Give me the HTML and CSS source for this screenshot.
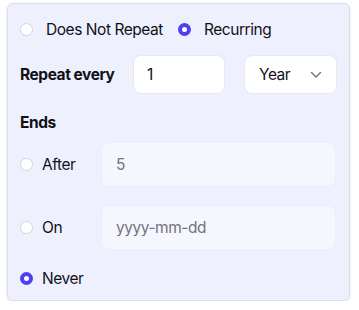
FILE: index.html
```html
<!DOCTYPE html>
<html lang="en">
<head>
    <meta charset="UTF-8">
    <meta name="viewport" content="width=device-width, initial-scale=1.0">
    <title>Repeat</title>
    <link rel="stylesheet" href="styles.css">
</head>
<body>
    <div class="card">
        <div class="mode-row">
            <label class="opt opt-wide"><input type="radio" name="mode"> Does Not Repeat</label>
            <label class="opt opt-wide"><input type="radio" name="mode" checked> Recurring</label>
        </div>

        <div class="every-row">
            <span class="heading">Repeat every</span>
            <input class="field" type="text" value="1">
            <div class="field select">
                <span>Year</span>
                <svg width="12" height="8" viewBox="0 0 12 8"><path d="M1.5 1.5 L6 6 L10.5 1.5" fill="none" stroke="#6b7280" stroke-width="1.4" stroke-linecap="round" stroke-linejoin="round"/></svg>
            </div>
        </div>

        <div class="heading ends">Ends</div>

        <div class="end-row">
            <label class="opt end-label"><input type="radio" name="end"> After</label>
            <input class="field soft" type="text" placeholder="5">
        </div>
        <div class="end-row second">
            <label class="opt end-label"><input type="radio" name="end"> On</label>
            <input class="field soft" type="text" placeholder="yyyy-mm-dd">
        </div>
        <div class="never-row">
            <label class="opt"><input type="radio" name="end" checked> Never</label>
        </div>
    </div>
</body>
</html>
```

FILE: styles.css
```css
body{
    margin: 0;
    background: #fff;
    font-family: Inter, "Noto Sans", sans-serif;
    font-size: 15.5px;
    letter-spacing: -0.45px;
    color: #111118;
}

.card{
    width: 343px;
    height: 298px;
    box-sizing: border-box;
    margin: 3px 0 0 7px;
    padding: 13px 13px 11px 12px;
    background: #eef0fd;
    border: 1px solid #dcdfea;
    border-radius: 6px;
    box-shadow: 0 1px 3px rgba(30, 40, 80, 0.12);
}

.opt{
    display: flex;
    align-items: center;
    gap: 9px;
    height: 24px;
    cursor: pointer;
}

.opt-wide{
    gap: 13px;
}

.mode-row{
    display: flex;
    gap: 15px;
}

input[type="radio"]{
    appearance: none;
    flex-shrink: 0;
    margin: 0;
    width: 13px;
    height: 13px;
    border-radius: 50%;
    background: #fff;
    border: 1px solid #d4d6de;
    box-sizing: border-box;
}

input[type="radio"]:checked{
    border: 4px solid #4f3ff0;
}

.heading{
    font-weight: 700;
}

.every-row{
    display: flex;
    align-items: center;
    margin-top: 14px;
}

.every-row .heading{
    width: 112px;
    flex-shrink: 0;
}

.field{
    height: 39px;
    box-sizing: border-box;
    border: 1px solid #e6e8f0;
    border-radius: 8px;
    background: #fff;
    padding: 0 13px;
    font-family: inherit;
    font-size: 15.5px;
    letter-spacing: -0.45px;
    color: #111118;
    outline: none;
}

.every-row input.field{
    width: 92px;
    margin-left: 1px;
    flex-shrink: 0;
}

.select{
    width: 93px;
    flex-shrink: 0;
    margin-left: 19px;
    display: flex;
    align-items: center;
    justify-content: space-between;
    padding: 0 14px 0 14px;
}

.ends{
    margin-top: 17px;
    line-height: 24px;
}

.end-row{
    display: flex;
    align-items: center;
    margin-top: 7px;
}

.end-row.second{
    margin-top: 18px;
}

.end-label{
    width: 81px;
    flex-shrink: 0;
}

.field.soft{
    flex: 1;
    width: 0;
    min-width: 0;
    height: 45px;
    background: #f6f7fe;
    border-color: #eceefa;
    padding: 0 14px;
}

.field.soft::placeholder{
    color: #72737c;
}

.never-row{
    margin-top: 16px;
}
```
